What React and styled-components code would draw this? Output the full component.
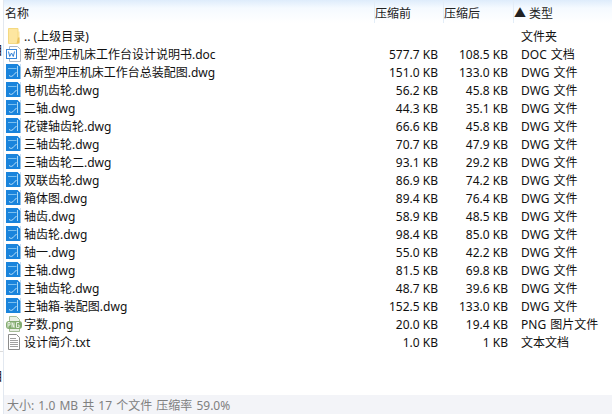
import styled, { createGlobalStyle } from "styled-components";

const GlobalStyle = createGlobalStyle`
  html, body {
    margin: 0;
    padding: 0;
    background: #fff;
  }
  body {
    font-family: "Segoe UI", "Noto Sans", "Noto Sans CJK SC", sans-serif;
    font-size: 12px;
    color: #111;
  }
`;

const files = [
  { icon: "folder", name: ".. (上级目录)", before: "", after: "", type: "文件夹" },
  { icon: "doc", name: "新型冲压机床工作台设计说明书.doc", before: "577.7 KB", after: "108.5 KB", type: "DOC 文档" },
  { icon: "dwg", name: "A新型冲压机床工作台总装配图.dwg", before: "151.0 KB", after: "133.0 KB", type: "DWG 文件" },
  { icon: "dwg", name: "电机齿轮.dwg", before: "56.2 KB", after: "45.8 KB", type: "DWG 文件" },
  { icon: "dwg", name: "二轴.dwg", before: "44.3 KB", after: "35.1 KB", type: "DWG 文件" },
  { icon: "dwg", name: "花键轴齿轮.dwg", before: "66.6 KB", after: "45.8 KB", type: "DWG 文件" },
  { icon: "dwg", name: "三轴齿轮.dwg", before: "70.7 KB", after: "47.9 KB", type: "DWG 文件" },
  { icon: "dwg", name: "三轴齿轮二.dwg", before: "93.1 KB", after: "29.2 KB", type: "DWG 文件" },
  { icon: "dwg", name: "双联齿轮.dwg", before: "86.9 KB", after: "74.2 KB", type: "DWG 文件" },
  { icon: "dwg", name: "箱体图.dwg", before: "89.4 KB", after: "76.4 KB", type: "DWG 文件" },
  { icon: "dwg", name: "轴齿.dwg", before: "58.9 KB", after: "48.5 KB", type: "DWG 文件" },
  { icon: "dwg", name: "轴齿轮.dwg", before: "98.4 KB", after: "85.0 KB", type: "DWG 文件" },
  { icon: "dwg", name: "轴一.dwg", before: "55.0 KB", after: "42.2 KB", type: "DWG 文件" },
  { icon: "dwg", name: "主轴.dwg", before: "81.5 KB", after: "69.8 KB", type: "DWG 文件" },
  { icon: "dwg", name: "主轴齿轮.dwg", before: "48.7 KB", after: "39.6 KB", type: "DWG 文件" },
  { icon: "dwg", name: "主轴箱-装配图.dwg", before: "152.5 KB", after: "133.0 KB", type: "DWG 文件" },
  { icon: "png", name: "字数.png", before: "20.0 KB", after: "19.4 KB", type: "PNG 图片文件" },
  { icon: "txt", name: "设计简介.txt", before: "1.0 KB", after: "1 KB", type: "文本文档" },
];

const FileIcon = ({ kind }) => {
  if (kind === "folder") {
    return (
      <svg width="16" height="16" viewBox="0 0 16 16">
        <path d="M2.500 0.500h9.500v15h-9.500z" fill="#fde6a0" stroke="#f4d982" />
        <path d="M12 3.500h1.500v11h-1.500z" fill="#fbe39a" />
        <path d="M12 9.500h1.500v6h-3z" fill="#ecc35f" />
      </svg>
    );
  }
  if (kind === "doc") {
    return (
      <svg width="16" height="16" viewBox="0 0 16 16">
        <path d="M3.500 0.500h8l3 3v12h-11z" fill="#fff" stroke="#aeb8c4" />
        <rect x="0.500" y="3.500" width="10" height="9" fill="#fff" stroke="#3a86d8" />
        <path d="M2.500 5.500l1.200 5 1.800-3.500 1.800 3.500 1.200-5" fill="none" stroke="#2f7fd6" />
      </svg>
    );
  }
  if (kind === "dwg") {
    return (
      <svg width="16" height="16" viewBox="0 0 16 16">
        <rect x="0" y="0" width="14.500" height="15" fill="#1a84dc" />
        <path d="M11.500 0h3v3z" fill="#fff" />
        <path d="M2 4.500h8.500" stroke="#7cc0f0" />
        <path d="M11.500 2v11" stroke="#a8d8f8" />
        <path d="M3 11.500c2 1.500 3.500 1 5-1l2.500-2.500" fill="none" stroke="#bfe2fa" />
      </svg>
    );
  }
  if (kind === "png") {
    return (
      <svg width="16" height="16" viewBox="0 0 16 16">
        <path d="M3.500 0.500h7l3 3v12h-10z" fill="#e9f0e4" stroke="#a5bb97" />
        <rect x="0" y="5" width="16" height="8" rx="3" fill="#83ac70" />
        <path d="M2 11.500V6.500h2v2.500H2M6 11.500V6.500l2 5V6.500M13 6.500H10.500v5H13V9h-1.200" fill="none" stroke="#f4f8f1" strokeWidth="0.900" />
      </svg>
    );
  }
  return (
    <svg width="16" height="16" viewBox="0 0 16 16">
      <path d="M2.500 0.500h8l3 3v12h-11z" fill="#fff" stroke="#8c8c8c" />
      <path d="M4 4.500h6M4 6.500h8M4 8.500h8M4 10.500h8M4 12.500h8" stroke="#a0a0a0" />
    </svg>
  );
};

export default function App() {
  return (
    <>
      <GlobalStyle />
      <Window>
        <Gutter>
          <GutterGlyph>目</GutterGlyph>
          <GutterDivider />
          <GutterGlyph>目</GutterGlyph>
        </Gutter>
        <Main>
          <Header>
            <HeaderCell $width={371}>名称</HeaderCell>
            <HeaderCell $width={70} $divided>压缩前</HeaderCell>
            <HeaderCell $width={71} $divided>压缩后</HeaderCell>
            <HeaderCell $width={96} $divided>▲ 类型</HeaderCell>
          </Header>
          <List>
            {files.map((file) => (
              <Row key={file.name}>
                <IconSlot>
                  <FileIcon kind={file.icon} />
                </IconSlot>
                <Name>{file.name}</Name>
                <Size>{file.before}</Size>
                <Size>{file.after}</Size>
                <TypeName>{file.type}</TypeName>
              </Row>
            ))}
          </List>
          <StatusBar>大小: 1.0 MB 共 17 个文件 压缩率 59.0%</StatusBar>
        </Main>
      </Window>
    </>
  );
}

const Window = styled.div`
  width: 612px;
  height: 414px;
  display: flex;
  overflow: hidden;
  background: #fff;
`;

const Gutter = styled.div`
  width: 4px;
  flex: none;
  overflow: hidden;
  display: flex;
  flex-direction: column;
  padding-top: 43px;
  box-sizing: border-box;
  background: #fff;
  border-right: 1px solid #e2e8f0;
`;

const GutterGlyph = styled.div`
  height: 16px;
  line-height: 16px;
  margin-left: -9px;
  white-space: nowrap;
  color: #222;
`;

const GutterDivider = styled.div`
  height: 1px;
  margin: 292px 0 17px;
  background: #dcdcdc;
`;

const Main = styled.div`
  flex: 1;
  display: flex;
  flex-direction: column;
`;

const Header = styled.div`
  height: 23px;
  display: flex;
  background: linear-gradient(#deecfb, #f5faff 35%, #fff);
`;

const HeaderCell = styled.div`
  width: ${(p) => p.$width}px;
  box-sizing: border-box;
  line-height: 27px;
  color: #222;
  border-left: 1px solid ${(p) => (p.$divided ? "#e3edf7" : "transparent")};
  margin-left: ${(p) => (p.$divided ? "-1px" : "0")};
`;

const List = styled.div`
  flex: 1;
  padding-top: 4px;
`;

const Row = styled.div`
  height: 18px;
  display: flex;
  align-items: center;
`;

const IconSlot = styled.div`
  width: 20px;
  height: 16px;
  flex: none;
  display: flex;
  padding-left: 2px;
  box-sizing: border-box;
`;

const Name = styled.div`
  width: 344px;
  flex: none;
  white-space: nowrap;
`;

const Size = styled.div`
  width: 70px;
  flex: none;
  text-align: right;
  white-space: nowrap;
`;

const TypeName = styled.div`
  margin-left: 13px;
  white-space: nowrap;
  word-spacing: 1px;
`;

const StatusBar = styled.div`
  height: 19px;
  line-height: 22px;
  padding-left: 3px;
  background: #f3f4f8;
  color: #808080;
  word-spacing: 1px;
`;
